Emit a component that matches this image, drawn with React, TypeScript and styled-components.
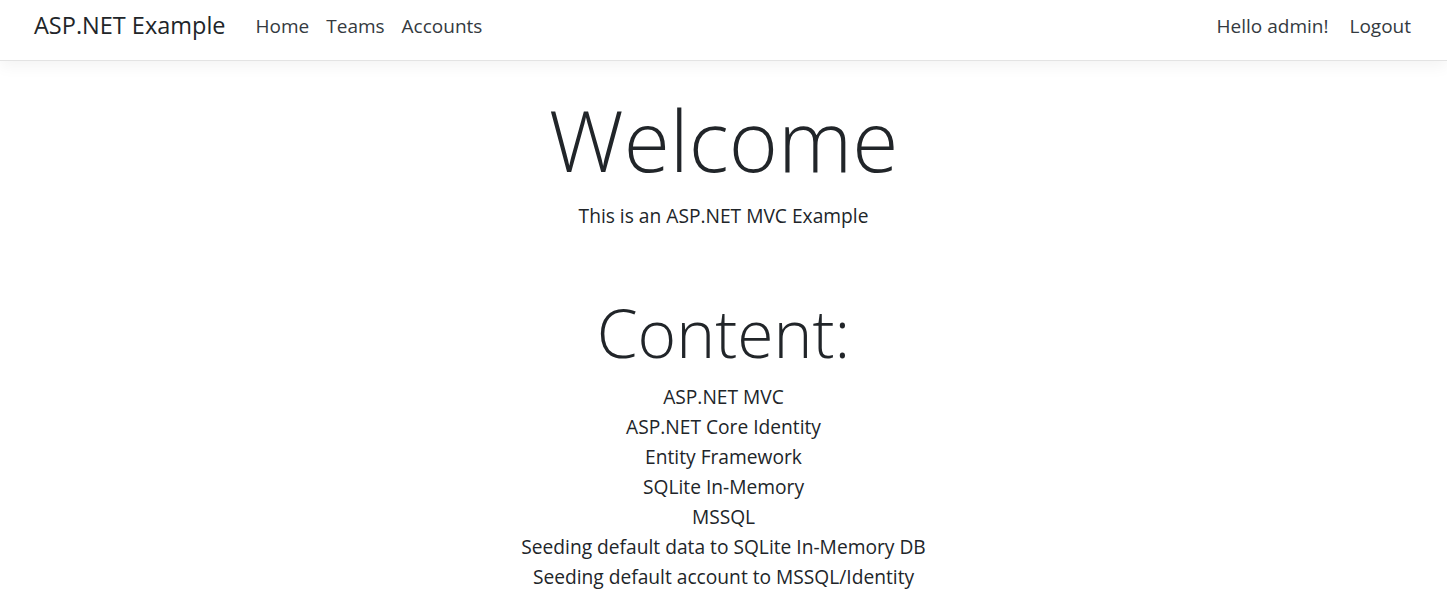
import React from "react"
import styled, { createGlobalStyle } from "styled-components"

const GlobalStyle = createGlobalStyle`
  html, body {
    margin: 0;
    padding: 0;
    background: #ffffff;
  }
  body {
    font-family: "Open Sans", "Noto Sans", "Liberation Sans", sans-serif;
    color: #212529;
  }
`;

// ナビゲーションバー
const Navbar = styled.header`
  height: 61px;
  box-sizing: border-box;
  border-bottom: 1px solid #e3e3e3;
  box-shadow: 0 5px 15px rgba(0, 0, 0, 0.05);
  display: flex;
  align-items: center;
  justify-content: space-between;
  padding: 0 36px 8px 34px;
`;

const NavGroup = styled.nav`
  display: flex;
  align-items: center;
`;

const Brand = styled.a`
  font-size: 23.5px;
  color: #212529;
  text-decoration: none;
  margin-right: 30px;
  line-height: 1;
`;

const NavLink = styled.a<{ $gap?: number }>`
  font-size: 19px;
  color: #343a40;
  text-decoration: none;
  margin-right: ${(p) => p.$gap ?? 17}px;
  line-height: 1;

  &:last-child {
    margin-right: 0;
  }
`;

// メイン
const Main = styled.main`
  display: flex;
  flex-direction: column;
  align-items: center;
  text-align: center;
`;

const Heading = styled.h1<{ $size: number; $top: number }>`
  margin: ${(p) => p.$top}px 0 0 0;
  font-weight: 300;
  font-size: ${(p) => p.$size}px;
  line-height: 1.2;
`;

const Lead = styled.p`
  margin: 10px 0 0 0;
  font-size: 19.2px;
  line-height: 30px;
`;

const ContentList = styled.div`
  margin-top: 10px;
  display: flex;
  flex-direction: column;
  align-items: center;
  font-size: 19.2px;
  line-height: 30px;
`;

const items = [
  "ASP.NET MVC",
  "ASP.NET Core Identity",
  "Entity Framework",
  "SQLite In-Memory",
  "MSSQL",
  "Seeding default data to SQLite In-Memory DB",
  "Seeding default account to MSSQL/Identity",
];

const App = () => (
  <>
    <GlobalStyle />
    <Navbar>
      <NavGroup>
        <Brand href="#">ASP.NET Example</Brand>
        <NavLink href="#">Home</NavLink>
        <NavLink href="#">Teams</NavLink>
        <NavLink href="#">Accounts</NavLink>
      </NavGroup>
      <NavGroup>
        <NavLink href="#" $gap={21}>Hello admin!</NavLink>
        <NavLink href="#">Logout</NavLink>
      </NavGroup>
    </Navbar>
    <Main>
      <Heading $size={84} $top={29}>Welcome</Heading>
      <Lead>This is an ASP.NET MVC Example</Lead>
      <Heading $size={66} $top={62}>Content:</Heading>
      <ContentList>
        {items.map((t) => (
          <div key={t}>{t}</div>
        ))}
      </ContentList>
    </Main>
  </>
);

export default App;
